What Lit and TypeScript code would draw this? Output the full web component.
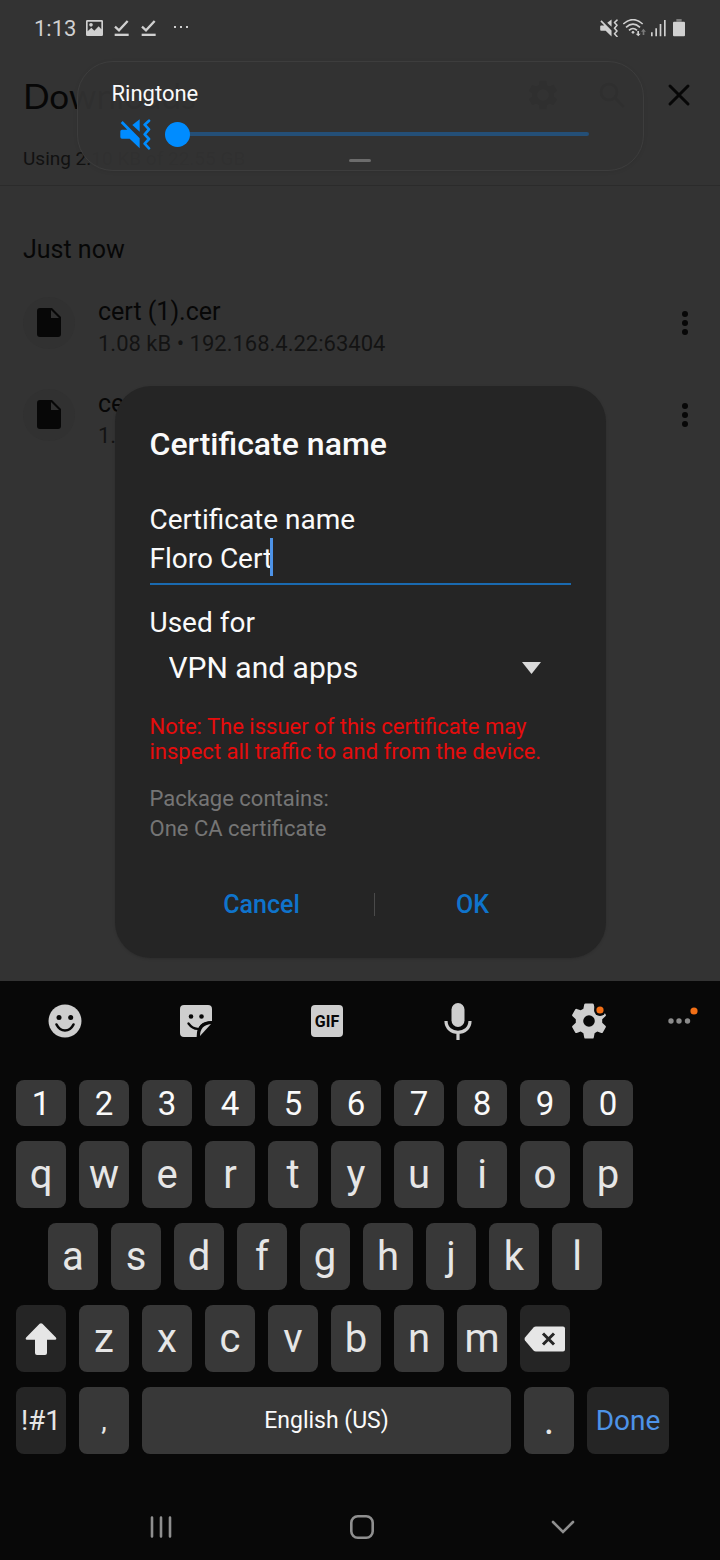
import { LitElement, html, css, svg } from "lit";
import { customElement } from "lit/decorators.js";

const muteShape = svg`
  <path d="M0 36q0-5 5-5h16L1 11l6-6 51 52v30L28 58H5q-5 0-5-5z"/>
  <path d="M36 17 58 0v37z"/>
  <path d="M86 4 73 16l13 14-13 15 13 14-13 14 13 14" fill="none" stroke="currentColor" stroke-width="8" stroke-linejoin="round" stroke-linecap="round"/>`;

const gearPath =
  "M19.4 13c.04-.32.07-.65.07-1s-.03-.68-.07-1l2.1-1.65c.2-.15.25-.42.13-.64l-2-3.46c-.12-.22-.39-.3-.61-.22l-2.49 1c-.52-.4-1.08-.73-1.69-.98l-.38-2.65C14.42 2.18 14.2 2 13.96 2h-4c-.25 0-.46.18-.49.42l-.38 2.65c-.61.25-1.17.59-1.69.98l-2.49-1c-.23-.09-.49 0-.61.22l-2 3.46c-.13.22-.07.49.12.64L4.53 11c-.04.32-.07.65-.07 1s.03.68.07 1l-2.11 1.65c-.19.15-.24.42-.12.64l2 3.46c.12.22.39.3.61.22l2.49-1c.52.4 1.08.73 1.69.98l.38 2.65c.03.24.24.42.49.42h4c.25 0 .46-.18.49-.42l.38-2.65c.61-.25 1.17-.59 1.69-.98l2.49 1c.23.09.49 0 .61-.22l2-3.46c.12-.22.07-.49-.12-.64z";

const base = css`
  :host {
    box-sizing: border-box;
    font-family: Roboto, "Liberation Sans", sans-serif;
  }
  * {
    box-sizing: border-box;
  }
  svg {
    display: block;
    fill: currentColor;
  }
  button {
    display: flex;
    align-items: center;
    justify-content: center;
    border: 0;
    padding: 0;
    background: none;
    color: inherit;
    font: inherit;
  }
`;

@customElement("status-bar")
class StatusBar extends LitElement {
  static styles = [
    base,
    css`
      :host {
        display: flex;
        align-items: center;
        justify-content: space-between;
        height: 56px;
        padding: 0 33px 0 34px;
        color: #d0d0d0;
        font-size: 22px;
      }
      .group {
        display: flex;
        align-items: center;
        gap: 10px;
      }
      .tight {
        gap: 5px;
      }
    `,
  ];

  render() {
    const check = html`<svg width="17" height="18" viewBox="0 0 51 54">
      <path d="M6 23 18 34 44 6" fill="none" stroke="currentColor" stroke-width="7" />
      <path d="M5 44h42v7H5z" />
    </svg>`;
    return html`
      <div class="group">
        <span>1:13</span>
        <svg width="17" height="16" viewBox="0 0 51 48">
          <path
            fill-rule="evenodd"
            d="M4 0h43q4 0 4 4v40q0 4-4 4H4q-4 0-4-4V4q0-4 4-4zM5 5v29l11-11 9 9 13-13 8 9V5zM15 9a5 5 0 1 1 0 11 5 5 0 0 1 0-11z"
          />
        </svg>
        ${check}${check}
        <svg width="28" height="6" viewBox="0 0 28 6">
          <path d="M7 1h2v2H7zM13 1h2v2h-2zM19 1h2v2h-2z" />
        </svg>
      </div>
      <div class="group tight">
        <svg width="18" height="18" viewBox="-1 -2 92 92">${muteShape}</svg>
        <svg width="23" height="18" viewBox="0 0 69 54">
          <g fill="none" stroke="currentColor" stroke-width="5">
            <path d="M1 15Q30-11 59 15" />
            <path d="M9 25Q30 6 51 25" />
            <path d="M18 34Q30 23 42 34" />
          </g>
          <circle cx="30" cy="40" r="4" />
          <path d="M43 36h5v8h5l-7 8-8-8h5z" />
          <path opacity=".45" d="M59 48h5V38h5l-8-9-7 9h5z" />
        </svg>
        <svg width="15" height="18" viewBox="0 0 45 54">
          <path d="M0 40h5v12H0zM13 28h5v24h-5zM26 15h5v37h-5zM39 3h5v49h-5z" />
        </svg>
        <svg width="16" height="18" viewBox="0 0 48 54">
          <path opacity=".45" d="M16 0h16v8H16z" />
          <path d="M9 8h30q3 0 3 3v38q0 3-3 3H9q-3 0-3-3V11q0-3 3-3z" />
        </svg>
      </div>
    `;
  }
}

@customElement("downloads-page")
class DownloadsPage extends LitElement {
  static styles = [
    base,
    css`
      :host {
        display: block;
        color: #070707;
      }
      header {
        display: flex;
        align-items: center;
        gap: 40px;
        height: 77px;
        padding: 0 27px 0 23px;
      }
      h1 {
        flex: 1;
        margin: 0;
        font: 400 35px/44px Lato, Roboto, sans-serif;
      }
      .usage {
        margin: 0;
        padding-left: 23px;
        border-bottom: 1px solid #2b2b2b;
        color: #111;
        font-size: 19px;
        line-height: 52px;
      }
      h2 {
        margin: 49px 23px 12px;
        font-size: 25px;
        font-weight: 400;
        line-height: 30px;
      }
      ul {
        margin: 0;
        padding: 0;
        list-style: none;
      }
      li {
        display: flex;
        align-items: center;
        gap: 23px;
        height: 92px;
        padding: 0 20px 0 23px;
      }
      .file {
        display: grid;
        place-items: center;
        width: 52px;
        height: 52px;
        border-radius: 50%;
        background: #313131;
      }
      .text {
        flex: 1;
        padding-top: 10px;
        line-height: 32px;
      }
      .name {
        font-size: 25px;
      }
      .detail {
        color: #131313;
        font-size: 22px;
      }
      .more {
        width: 30px;
        height: 48px;
      }
    `,
  ];

  render() {
    const files = [
      { name: "cert (1).cer", detail: "1.08 kB • 192.168.4.22:63404" },
      { name: "cert.cer", detail: "1.08 kB • 192.168.4.22:63404" },
    ];
    return html`
      <header>
        <h1>Downloads</h1>
        <button aria-label="Settings">
          <svg width="32" height="32" viewBox="1 1 22 22">
            <path fill-rule="evenodd" d="${gearPath}M12 8a4 4 0 1 0 0 8 4 4 0 0 0 0-8z" />
          </svg>
        </button>
        <button aria-label="Search">
          <svg width="26" height="26" viewBox="0 0 26 26">
            <g fill="none" stroke="currentColor" stroke-width="3">
              <circle cx="10" cy="10" r="8" />
              <path d="m16 16 9 9" />
            </g>
          </svg>
        </button>
        <button aria-label="Close">
          <svg width="28" height="28" viewBox="0 0 28 28">
            <path d="m5 5 18 18M23 5 5 23" stroke="currentColor" stroke-width="3" stroke-linecap="round" />
          </svg>
        </button>
      </header>
      <p class="usage">Using 2.10 KB of 22.55 GB</p>
      <h2>Just now</h2>
      <ul>
        ${files.map(
          (f) => html`<li>
            <span class="file">
              <svg width="24" height="30" viewBox="0 0 24 30">
                <path fill-rule="evenodd" d="M3 0h12l9 9v17q0 3-3 3H3q-3 0-3-3V3q0-3 3-3zM14 2v8h8z" />
              </svg>
            </span>
            <div class="text">
              <div class="name">${f.name}</div>
              <div class="detail">${f.detail}</div>
            </div>
            <button class="more" aria-label="More options">
              <svg width="8" height="26" viewBox="0 0 8 26">
                <circle cx="4" cy="4" r="3" /><circle cx="4" cy="13" r="3" /><circle cx="4" cy="22" r="3" />
              </svg>
            </button>
          </li>`
        )}
      </ul>
    `;
  }
}

@customElement("volume-panel")
class VolumePanel extends LitElement {
  static styles = [
    base,
    css`
      :host {
        display: flex;
        flex-direction: column;
        width: 100%;
        max-width: 567px;
        padding: 19px 54px 8px 34px;
        border: 1px solid #3d3d3d;
        border-radius: 36px;
        background: rgba(51, 51, 51, 0.93);
        box-shadow: 0 1px 4px rgba(0, 0, 0, 0.08);
        color: #fafafa;
      }
      label {
        font-size: 22px;
        line-height: 26px;
      }
      .row {
        display: flex;
        align-items: center;
        gap: 14px;
        margin-top: 11px;
        padding-left: 8px;
        color: #008cff;
      }
      input {
        flex: 1;
        min-width: 0;
        height: 32px;
        margin: 0;
        appearance: none;
        background: none;
      }
      input::-webkit-slider-runnable-track {
        height: 4px;
        border-radius: 2px;
        background: #244f77;
      }
      input::-webkit-slider-thumb {
        appearance: none;
        width: 25px;
        height: 25px;
        margin-top: -10px;
        border-radius: 50%;
        background: #008cff;
      }
      .grip {
        align-self: center;
        width: 22px;
        height: 3px;
        margin: 9px 0 0 20px;
        border-radius: 2px;
        background: #6c6c6c;
      }
    `,
  ];

  render() {
    return html`
      <label for="ringtone">Ringtone</label>
      <div class="row">
        <svg width="31" height="31" viewBox="-1 -1 93 93">${muteShape}</svg>
        <input id="ringtone" type="range" min="0" max="15" value="0" />
      </div>
      <span class="grip"></span>
    `;
  }
}

@customElement("cert-dialog")
class CertDialog extends LitElement {
  static styles = [
    base,
    css`
      :host {
        display: block;
        width: 100%;
        max-width: 491px;
        padding: 39px 35px 34px;
        border-radius: 36px;
        background: #252525;
        box-shadow: 0 1px 3px rgba(0, 0, 0, 0.15);
        color: #fafafa;
      }
      h2 {
        margin: 0 0 39px;
        font-size: 32px;
        font-weight: 500;
        line-height: 38px;
      }
      label {
        display: block;
        font-size: 28px;
        line-height: 36px;
      }
      .field {
        display: flex;
        margin-bottom: 20px;
        padding-bottom: 7px;
        border-bottom: 2px solid #1a6ab0;
      }
      input {
        field-sizing: content;
        height: 38px;
        padding: 2px 0 0;
        border: 0;
        outline: 0;
        background: none;
        color: inherit;
        font: 400 28px/36px Roboto, sans-serif;
      }
      .caret {
        width: 3px;
        margin-left: -2px;
        background: #4d93e8;
      }
      .pick {
        display: flex;
        align-items: center;
        margin: 7px 0 26px;
        padding: 0 30px 0 19px;
      }
      select {
        flex: 1;
        height: 40px;
        padding: 0;
        border: 0;
        appearance: none;
        background: none;
        color: inherit;
        font: 400 30px/40px Roboto, sans-serif;
      }
      .arrow {
        color: #dadada;
      }
      .note,
      .contents {
        margin: 0 0 20px;
        color: #e60c0c;
        font-size: 22px;
        line-height: 25px;
      }
      .contents {
        margin-bottom: 40px;
        color: #757575;
        line-height: 30px;
      }
      .actions {
        display: grid;
        grid-template-columns: 8fr 1px 7fr;
        align-items: center;
      }
      .actions button {
        height: 40px;
        color: #0f74cc;
        font-size: 25px;
        font-weight: 500;
      }
      .rule {
        height: 23px;
        background: #4a4a4a;
      }
    `,
  ];

  render() {
    return html`
      <h2>Certificate name</h2>
      <label for="name">Certificate name</label>
      <div class="field"><input id="name" type="text" value="Floro Cert" /><span class="caret"></span></div>
      <label for="usage">Used for</label>
      <div class="pick">
        <select id="usage">
          <option selected>VPN and apps</option>
          <option>Wi-Fi</option>
        </select>
        <svg class="arrow" width="19" height="12" viewBox="0 0 19 12"><path d="M0 0h19l-9.500 12z" /></svg>
      </div>
      <p class="note">Note: The issuer of this certificate may inspect all traffic to and from the device.</p>
      <p class="contents">Package contains:<br />One CA certificate</p>
      <div class="actions">
        <button>Cancel</button>
        <span class="rule"></span>
        <button>OK</button>
      </div>
    `;
  }
}

@customElement("soft-keyboard")
class SoftKeyboard extends LitElement {
  static styles = [
    base,
    css`
      :host {
        display: block;
        background: #080808;
        color: #e6e6e6;
      }
      .tools {
        display: grid;
        grid-template-columns: repeat(5, 131fr) 50fr;
        height: 80px;
        padding-right: 16px;
        color: #cecece;
      }
      .keys {
        display: grid;
        gap: 15px;
        padding: 19px 0 40px;
      }
      .row {
        display: grid;
        grid-auto-flow: column;
        grid-auto-columns: minmax(0, 1fr);
        gap: 13px;
        height: 67px;
        padding: 0 87px 0 16px;
        font-size: 40px;
      }
      .digits {
        height: 46px;
        color: #fafafa;
        font-size: 33px;
      }
      .home {
        padding: 0 118px 0 48px;
      }
      .shift {
        padding-right: 150px;
      }
      .bottom {
        grid-template-columns: 50fr 50fr 369fr 50fr 82fr;
        padding-right: 51px;
      }
      .key {
        border-radius: 8px;
        background: #383838;
        white-space: nowrap;
      }
      .dark {
        background: #252525;
      }
      .symbols,
      .done {
        font-size: 28px;
      }
      .space {
        color: #fafafa;
        font-size: 23px;
      }
      .done {
        color: #4d93e8;
      }
      .gif {
        font: 700 16px Roboto, sans-serif;
        fill: #080808;
      }
      nav {
        display: grid;
        grid-template-columns: repeat(3, 1fr);
        height: 66px;
        padding: 0 56px 0 60px;
        color: #8f8f8f;
      }
    `,
  ];

  private keys(chars: string) {
    return [...chars].map((c) => html`<button class="key">${c}</button>`);
  }

  render() {
    return html`
      <div class="tools">
        <button aria-label="Emoji">
          <svg width="34" height="34" viewBox="0 0 34 34">
            <circle cx="17" cy="17" r="16.500" />
            <g fill="#080808"><circle cx="11" cy="13.500" r="2.500" /><circle cx="22.700" cy="13.500" r="2.500" /></g>
            <path d="M8.500 20.500q3 6 8.500 6t8.500-6" fill="none" stroke="#080808" stroke-width="2.600" stroke-linecap="round" />
          </svg>
        </button>
        <button aria-label="Stickers">
          <svg width="34" height="34" viewBox="0 0 34 34">
            <path d="M5 1h24q4 0 4 4v12q-15 0-15 15v1H5q-4 0-4-4V5q0-4 4-4z" />
            <path d="M21 32q0-11 11-12z" />
            <g fill="#080808"><circle cx="12" cy="12.500" r="2.300" /><circle cx="22.500" cy="12.500" r="2.300" /></g>
            <path d="M9.500 19.500q4 5.500 9.500 5.300M18.800 33q0-15 14.500-14.700" fill="none" stroke="#080808" stroke-width="2.300" stroke-linecap="round" />
          </svg>
        </button>
        <button aria-label="GIF">
          <svg width="34" height="34" viewBox="0 0 34 34">
            <rect x="1" y="1" width="32" height="32" rx="4" />
            <text class="gif" x="17" y="22.500" text-anchor="middle">GIF</text>
          </svg>
        </button>
        <button aria-label="Voice input">
          <svg width="28" height="38" viewBox="0 0 28 38">
            <rect x="7.500" y="1" width="13" height="24" rx="6.500" />
            <path d="M2 19c0 15 24 15 24 0M14 30v8" fill="none" stroke="currentColor" stroke-width="3.200" />
          </svg>
        </button>
        <button aria-label="Keyboard settings">
          <svg width="42" height="42" viewBox="-4 -4 42 42">
            <path
              fill-rule="evenodd"
              d="M13.500-.5h7q1 0 1.300 1l.8 4.200 2.700 1.600 4-1.400q1-.3 1.500.5l3 5.300q.4.900-.4 1.600l-3.200 2.900v3.600l3.200 2.900q.8.600.4 1.500l-3 5.300q-.5.900-1.500.5l-4-1.400-2.700 1.600-.8 4.200q-.3 1.200-1.300 1.200h-7q-1 0-1.300-1.200l-.8-4.200-2.700-1.600-4 1.400q-1 .4-1.500-.5l-3-5.300q-.4-.9.400-1.500l3.200-2.900v-3.600L.6 12.300q-.8-.7-.4-1.600l3-5.300q.5-.8 1.500-.5l4 1.400 2.700-1.600.8-4.200q.3-1 1.300-1zM17 11.200a5.800 5.800 0 1 0 0 11.600 5.800 5.800 0 0 0 0-11.600z"
            />
            <circle cx="28" cy="6" r="6" fill="#080808" />
            <circle cx="28" cy="6" r="3.600" fill="#f26f16" />
          </svg>
        </button>
        <button aria-label="More tools">
          <svg width="38" height="34" viewBox="0 0 38 34">
            <g fill="#8a8a8a">
              <circle cx="11" cy="17" r="2.700" /><circle cx="19" cy="17" r="2.700" /><circle cx="27.500" cy="17" r="2.700" />
            </g>
            <circle cx="34" cy="7" r="3.600" fill="#f26f16" />
          </svg>
        </button>
      </div>
      <div class="keys">
        <div class="row digits">${this.keys("1234567890")}</div>
        <div class="row">${this.keys("qwertyuiop")}</div>
        <div class="row home">${this.keys("asdfghjkl")}</div>
        <div class="row shift">
          <button class="key dark" aria-label="Shift">
            <svg width="32" height="32" viewBox="0 0 32 32">
              <path d="M14.600.8q1.400-1.300 2.800 0l13.500 13.600q1.200 2-.9 2.300h-8V30q0 2-2 2h-8q-2 0-2-2V16.700H2q-2.100-.3-.9-2.300z" />
            </svg>
          </button>
          ${this.keys("zxcvbnm")}
          <button class="key dark" aria-label="Backspace">
            <svg width="42" height="26" viewBox="0 0 42 26">
              <path d="M12 .5h27q2 0 2 2v21q0 2-2 2H12q-1.500 0-2.500-1L1 14.500q-1-1.500 0-3L9.500 1.500q1-1 2.500-1z" />
              <path d="m19 7.500 11 11M30 7.500l-11 11" stroke="#252525" stroke-width="3" />
            </svg>
          </button>
        </div>
        <div class="row bottom">
          <button class="key dark symbols">!#1</button>
          <button class="key symbols">,</button>
          <button class="key space">English (US)</button>
          <button class="key">.</button>
          <button class="key dark done">Done</button>
        </div>
      </div>
      <nav>
        <button aria-label="Recent apps">
          <svg width="22" height="22" viewBox="0 0 22 22">
            <path d="M2 1.500v19M11 1.500v19M20 1.500v19" stroke="currentColor" stroke-width="2.600" stroke-linecap="round" />
          </svg>
        </button>
        <button aria-label="Home">
          <svg width="24" height="24" viewBox="0 0 24 24">
            <rect x="1.300" y="1.300" width="21.400" height="21.400" rx="6.500" fill="none" stroke="currentColor" stroke-width="2.600" />
          </svg>
        </button>
        <button aria-label="Hide keyboard">
          <svg width="24" height="14" viewBox="0 0 24 14">
            <path d="m2 2 10 10L22 2" fill="none" stroke="currentColor" stroke-width="2.600" stroke-linecap="round" />
          </svg>
        </button>
      </nav>
    `;
  }
}

@customElement("app-root")
class AppRoot extends LitElement {
  static styles = css`
    :host {
      display: flex;
      flex-direction: column;
      min-height: 100vh;
    }
    main {
      position: relative;
      flex: 1;
      background: #333;
    }
    .overlay {
      position: absolute;
      inset: 0;
      display: flex;
      justify-content: center;
      align-items: flex-end;
      padding: 0 16px 23px;
    }
    .top {
      align-items: flex-start;
      padding: 61px 16px 0;
    }
  `;

  render() {
    return html`
      <main>
        <status-bar></status-bar>
        <downloads-page></downloads-page>
        <div class="overlay top"><volume-panel></volume-panel></div>
        <div class="overlay"><cert-dialog></cert-dialog></div>
      </main>
      <soft-keyboard></soft-keyboard>
    `;
  }
}
